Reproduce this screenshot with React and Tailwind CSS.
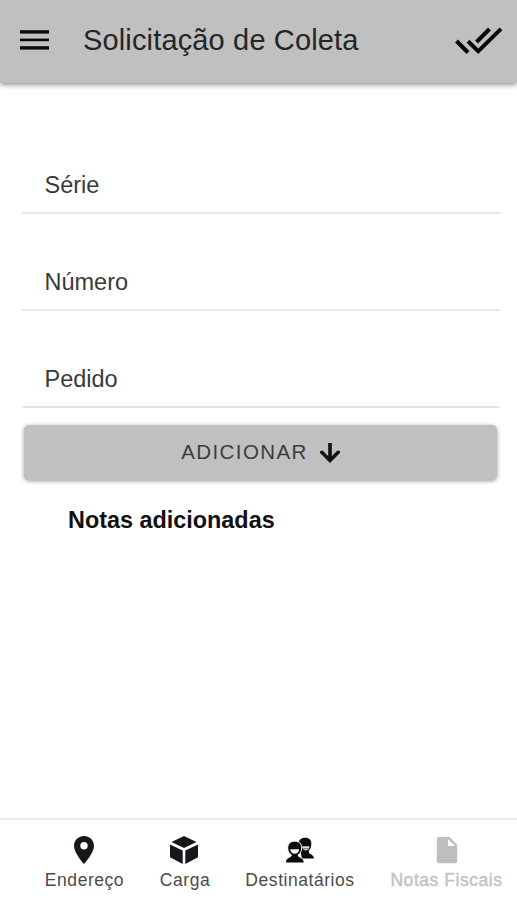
const fields = ["Série", "Número", "Pedido"];

function MenuIcon() {
  return (
    <svg viewBox="0 0 30 20" className="h-5 w-[30px] shrink-0" fill="#0a0a0a">
      <rect x="0" y="0.2" width="29" height="3.4" />
      <rect x="0" y="8.6" width="29" height="2.6" />
      <rect x="0" y="16.2" width="29" height="3.4" />
    </svg>
  );
}

function DoneAllIcon() {
  return (
    <svg viewBox="0 0 48 28" className="mt-px h-7 w-12 shrink-0" fill="none" stroke="#080808" strokeWidth="4">
      <path d="M1.5 14 L13 25.5" />
      <path d="M13 14.3 L23.2 24.3 L46 1.8" />
      <path d="M21.5 15 L34.5 2" />
    </svg>
  );
}

function ArrowDownIcon() {
  return (
    <svg viewBox="0 0 20 22" className="h-[22px] w-5" fill="none" stroke="#111" strokeWidth="3.6">
      <path d="M10 1 V18.5" />
      <path d="M1.8 10.3 L10 18.5 L18.2 10.3" strokeLinecap="round" />
    </svg>
  );
}

function PinIcon() {
  return (
    <svg viewBox="0 0 30 30" className="h-[30px] w-[30px]" fill="#15171a">
      <path fillRule="evenodd" d="M15 1 C9.3 1 5 5.3 5 10.9 C5 18 15 29 15 29 C15 29 25 18 25 10.9 C25 5.3 20.7 1 15 1 Z M15 7 A3.7 3.7 0 1 1 15 14.4 A3.7 3.7 0 1 1 15 7 Z" />
    </svg>
  );
}

function CubeIcon() {
  return (
    <svg viewBox="0 0 30 30" className="h-[30px] w-[30px]" fill="#15171a">
      <path d="M15 1 L27.5 7 L15 13 L2.5 7 Z" />
      <path d="M1 9.5 L13.7 15.6 V29 L1 22.3 Z" />
      <path d="M29 9.5 L16.3 15.6 V29 L29 22.3 Z" />
    </svg>
  );
}

function PeopleIcon() {
  return (
    <svg viewBox="0 0 30 30" className="h-[30px] w-[30px]" fill="#0c0c0c">
      <path d="M13.5 8.5 C14 4.5 16.5 2.8 20.3 2.8 C24.2 2.8 26.6 5.2 26.3 9.2 C26.3 12.5 25 14.5 23.8 15.5 V17.5 C24.5 19.5 28.5 19 29 23.5 H17 Z" />
      <path d="M17 11.3 H24.6 Q24 15.3 20.8 15.5 Q17.5 15.2 17 11.3 Z" fill="#dcdcdc" />
      <path d="M18.5 13.6 H23" stroke="#777" strokeWidth="1" />
      <path d="M2.7 13 C2.7 8.5 5.5 6.2 9.7 6.2 C14 6.2 16.7 8.5 16.7 13 C16.7 16.5 15 18.5 13.3 19.7 V21 C14.5 22.6 19 22.3 19.3 28 H0.3 C0.6 22.3 5 22.6 6.2 21 V19.7 C4.3 18.5 2.7 16.5 2.7 13 Z" stroke="#fff" strokeWidth="1" />
      <path d="M5.2 14.2 H14.2 Q13.7 18.6 9.7 18.8 Q5.7 18.6 5.2 14.2 Z" fill="#f4f4f4" />
    </svg>
  );
}

function DocumentIcon() {
  return (
    <svg viewBox="0 0 30 30" className="h-[30px] w-[30px]" fill="#bebebe">
      <path fillRule="evenodd" d="M7 2 H17.5 L25.2 9.8 V26 Q25.2 28.3 23 28.3 H7 Q4.8 28.3 4.8 26 V4.3 Q4.8 2 7 2 Z M16 4 V11 H23 Z" />
    </svg>
  );
}

const tabs = [
  { label: "Endereço", Icon: PinIcon, box: "w-[80px] ml-[44px]", text: "pl-px text-[#4b4b4b]" },
  { label: "Carga", Icon: CubeIcon, box: "w-[50px] ml-[35px]", text: "pl-[2px] text-[#4b4b4b]" },
  { label: "Destinatários", Icon: PeopleIcon, box: "w-[110px] ml-[36px]", text: "text-[#4b4b4b]" },
  { label: "Notas Fiscais", Icon: DocumentIcon, box: "w-[114px] ml-[35px]", text: "pr-px text-[#c4c4c4] [-webkit-text-stroke:0.5px_#c4c4c4]" },
];

export default function App() {
  return (
    <div className="flex h-[900px] w-[517px] flex-col overflow-hidden bg-white font-['Liberation_Sans',Arial,sans-serif]">
      <header className="flex h-[83px] shrink-0 items-center bg-[#c0c0c0] pr-[14px] pb-[3px] pl-5 shadow-[0_1px_6px_rgba(0,0,0,0.55)]">
        <MenuIcon />
        <h1 className="ml-[33px] flex-1 text-[29px] leading-9 tracking-[0.15px] whitespace-nowrap text-[#252525]">Solicitação de Coleta</h1>
        <DoneAllIcon />
      </header>

      <main className="flex flex-1 flex-col pt-[34px] pr-[17px] pl-[22px]">
        {fields.map((label) => (
          <label key={label} className="flex h-[97px] flex-col justify-end border-b-2 border-[#e6e6e6] pb-[13px] pl-[22.5px] text-[23.5px] leading-7 text-[#3a3a3a]">
            {label}
          </label>
        ))}
        <button className="mt-[17px] mr-[3px] ml-[2px] flex h-[55px] shrink-0 items-center justify-center gap-3 rounded-[5px] bg-[#c0c0c0] text-[20.5px] tracking-[1.4px] text-[#3c3c3c] shadow-[0_1px_4px_rgba(0,0,0,0.4)]">
          ADICIONAR
          <ArrowDownIcon />
        </button>
        <h2 className="mt-[26px] ml-[46px] text-[23.4px] leading-7 font-bold text-[#111]">Notas adicionadas</h2>
      </main>

      <nav className="flex h-[82px] shrink-0 border-t-2 border-[#ebebeb] pt-[15px]">
        {tabs.map(({ label, Icon, box, text }) => (
          <div key={label} className={`flex shrink-0 flex-col items-center ${box}`}>
            <Icon />
            <span className={`mt-[3px] text-[17.5px] leading-6 tracking-[0.55px] whitespace-nowrap ${text}`}>{label}</span>
          </div>
        ))}
      </nav>
    </div>
  );
}
